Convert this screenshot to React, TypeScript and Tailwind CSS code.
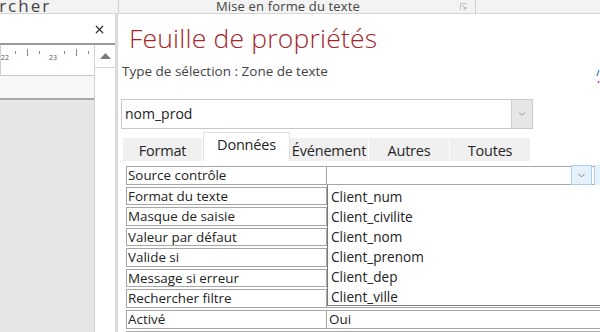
import { X, ChevronDown } from 'lucide-react';

const rows = [
  { label: 'Source contrôle', value: '', h: 'h-[19px]' },
  { label: 'Format du texte', value: '', h: 'h-[18px]' },
  { label: 'Masque de saisie', value: '', h: 'h-[19px]' },
  { label: 'Valeur par défaut', value: '', h: 'h-[18px]' },
  { label: 'Valide si', value: '', h: 'h-[19px]' },
  { label: 'Message si erreur', value: '', h: 'h-[18px]' },
  { label: 'Rechercher filtre', value: '', h: 'h-[19px]' },
  { label: 'Activé', value: 'Oui', h: 'h-[19px]' },
  { label: '', value: '', h: 'h-[19px]' },
];

const fields = ['Client_num', 'Client_civilite', 'Client_nom', 'Client_prenom', 'Client_dep', 'Client_ville'];

const tabs = [
  { name: 'Format', w: 'w-[80px]' },
  { name: 'Données', w: 'w-[87px]', active: true },
  { name: 'Événement', w: 'w-[79px]' },
  { name: 'Autres', w: 'w-[81px]' },
  { name: 'Toutes', w: 'w-[81px]' },
];

function Ruler() {
  return (
    <div className="relative h-[31px] bg-white border-b border-[#c8c8c8] border-l border-l-[#d0d0d0]">
      {/* ticks */}
      <div className="absolute left-[14px] top-[6px] w-px h-[3px] bg-[#8a8a8a]" />
      <div className="absolute left-[26px] top-[4px] w-px h-[7px] bg-[#8a8a8a]" />
      <div className="absolute left-[38px] top-[6px] w-px h-[3px] bg-[#8a8a8a]" />
      <div className="absolute left-[63px] top-[6px] w-px h-[3px] bg-[#8a8a8a]" />
      <div className="absolute left-[75px] top-[4px] w-px h-[7px] bg-[#8a8a8a]" />
      <div className="absolute left-[87px] top-[6px] w-px h-[3px] bg-[#8a8a8a]" />
      <span className="absolute left-0 top-[9px] text-[7px] leading-[8px] text-[#555]">22</span>
      <span className="absolute left-[48px] top-[9px] text-[7px] leading-[8px] text-[#555]">23</span>
    </div>
  );
}

export default function App() {
  return (
    <div
      className="relative w-[600px] h-[332px] overflow-hidden bg-white text-[#262626]"
      style={{ fontFamily: '"Open Sans", "Noto Sans", sans-serif' }}
    >
      {/* Top ribbon group labels */}
      <div className="flex h-[14px] bg-[#f3f3f3] border-b border-[#d6d6d6] text-[13px] leading-[12px] text-[#444]">
        <div className="w-[119px] shrink-0 overflow-hidden border-r border-[#d0d0d0]">
          <span className="block ml-[-59px] whitespace-nowrap text-[17px] leading-[11px] tracking-[2px]">Rechercher</span>
        </div>
        <div className="relative w-[357px] shrink-0 border-r border-[#d0d0d0]">
          <span className="absolute left-[97px] top-0 whitespace-nowrap tracking-[0.15px]">Mise en forme du texte</span>
          <svg className="absolute left-[341px] top-[3px]" width="7" height="7" viewBox="0 0 7 7">
            <path d="M0.5 6.5V0.5H6.5" stroke="#c4c4c4" fill="none" />
            <path d="M2 2L6 6M6 3.5V6H3.5" stroke="#b0b0b0" fill="none" />
          </svg>
        </div>
        <div className="flex-1" />
      </div>

      <div className="flex h-[318px]">
        {/* Left form design area */}
        <div className="flex flex-col w-[115px] shrink-0">
          <div className="h-[29px] flex items-center justify-end pr-[9px] pt-[2px]">
            <X className="w-[13px] h-[13px] text-[#333]" strokeWidth={2.2} />
          </div>
          <div className="h-[2px] bg-[#9a9a9a]" />
          <div className="flex flex-1">
            <div className="flex flex-col w-[94px] shrink-0">
              <Ruler />
              <div className="h-[22px] bg-[#f7f7f7]" />
              <div className="h-[2px] bg-[#a8a8a8]" />
              <div className="flex-1 bg-[#e6e6e6]" />
            </div>
            <div className="flex flex-col flex-1 border-l border-[#d2d2d2] bg-white">
              <div className="h-[23px] flex items-center justify-center border-b border-[#d2d2d2]">
                <svg width="11" height="6" viewBox="0 0 11 6">
                  <path d="M0 6L5.5 0L11 6Z" fill="#7a7a7a" />
                </svg>
              </div>
            </div>
          </div>
        </div>
        <div className="w-[3px] shrink-0 bg-[#dadada]" />

        {/* Property sheet */}
        <div className="relative flex-1 min-w-0 flex flex-col pl-[3px]">
          <h1 className="mt-[8px] ml-[8px] text-[26.5px] leading-[32px] font-light tracking-[0.2px] text-[#a4262c] whitespace-nowrap">
            Feuille de propriétés
          </h1>
          <p className="mt-[8px] ml-[1px] text-[13.5px] leading-[18px] text-[#444] whitespace-nowrap">
            Type de sélection : Zone de texte
          </p>

          <div className="mt-[19px] flex w-[412px] h-[30px] border border-[#c8c8c8] bg-white">
            <span className="flex-1 pl-[3px] text-[14px] leading-[28px] text-[#222]">nom_prod</span>
            <div className="w-[21px] flex items-center justify-center bg-[#e6e6e6] border-l border-[#cfcfcf]">
              <ChevronDown className="w-[10px] h-[10px] text-[#666]" strokeWidth={1.5} />
            </div>
          </div>

          {/* tabs */}
          <div className="mt-[3px] ml-[2px] flex items-end h-[29px]">
            {tabs.map((t) =>
              t.active ? (
                <div
                  key={t.name}
                  className={`${t.w} shrink-0 h-[29px] bg-white border-x border-t border-[#e0e0e0] text-center text-[14.5px] leading-[24px] tracking-[-0.2px]`}
                >
                  {t.name}
                </div>
              ) : (
                <div
                  key={t.name}
                  className={`${t.w} shrink-0 h-[23px] bg-[#f0f0f0] border-r border-white text-center text-[14.5px] leading-[26px] tracking-[-0.2px]`}
                >
                  {t.name}
                </div>
              )
            )}
          </div>

          {/* property grid */}
          <div className="mt-[5px] ml-[5px] flex flex-col gap-[2px] w-[500px]">
            {rows.map((r, i) => (
              <div key={i} className={`flex shrink-0 ${r.h}`}>
                <div className="w-[201px] shrink-0 border border-[#a6a6a6] pl-px text-[13.4px] leading-[16px] text-[#222] whitespace-nowrap">
                  {r.label}
                </div>
                <div className="flex-1 relative border-y border-r border-[#a6a6a6] pl-[2px] text-[13.4px] leading-[16px] text-[#222]">
                  {r.value}
                </div>
              </div>
            ))}
          </div>

          {/* chevron button in Source contrôle */}
          <div className="absolute left-[453px] top-[151px] w-[21px] h-[20px] flex items-center justify-center bg-[#e5f1fb] border border-[#a9cdee]">
            <ChevronDown className="w-[11px] h-[11px] text-[#555]" strokeWidth={1.5} />
          </div>
          <div className="absolute left-[476px] top-[151px] w-[10px] h-[20px] bg-[#e5f1fb] border-l border-[#a9cdee]" />

          {/* dropdown list */}
          <div className="absolute left-[209px] top-[171px] w-[300px] h-[121px] bg-white border-l border-b border-[#7a7a7a] pt-[2px]">
            {fields.map((f) => (
              <div key={f} className="h-[20px] pl-[3px] text-[13.6px] leading-[20px] text-[#222]">
                {f}
              </div>
            ))}
          </div>

          {/* partially visible icon at right edge */}
          <svg className="absolute right-0 top-[56px]" width="4" height="16" viewBox="0 0 4 16">
            <path d="M1 6L3 0" stroke="#4a7fc1" strokeWidth="1.2" />
            <path d="M2 13L3 11" stroke="#a04aa8" strokeWidth="1.4" />
          </svg>
        </div>
      </div>
    </div>
  );
}
